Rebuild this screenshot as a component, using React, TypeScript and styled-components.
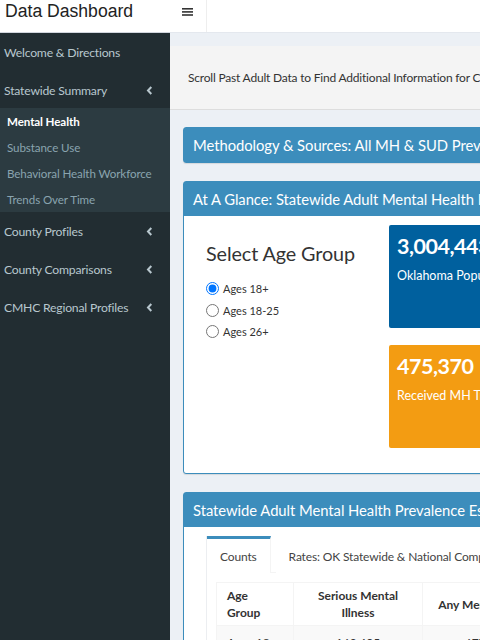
import React from 'react';
import styled, { createGlobalStyle } from 'styled-components';

const GlobalStyle = createGlobalStyle`
  html, body {
    margin: 0;
    padding: 0;
    overflow: hidden;
    background: #ecf0f5;
  }
  body {
    font-family: Lato, 'Open Sans', sans-serif;
    font-size: 12px;
    color: #333;
  }
`;

const Page = styled.div`
  display: grid;
  grid-template-columns: 170px 900px;
  grid-template-rows: 33px 1fr;
  min-height: 100vh;
  width: 1070px;
`;

const Logo = styled.div`
  background: #fff;
  border-bottom: 1px solid #d2d6de;
  box-sizing: border-box;
  font-family: 'Liberation Sans', Arial, sans-serif;
  font-size: 17.6px;
  line-height: 22px;
  padding: 0 0 0 5px;
  color: #222;
`;

const Navbar = styled.div`
  background: #fff;
  display: flex;
  border-bottom: 1px solid #e4e8ee;
  box-sizing: border-box;
`;

const Toggle = styled.div`
  width: 37px;
  border-right: 1px solid #eee;
  display: flex;
  justify-content: center;
  align-items: flex-start;
  padding: 8px 1px 0 0;
  box-sizing: border-box;
`;

const BarsIcon = () => (
  <svg width="11" height="8" viewBox="0 0 11 8">
    <rect x="0" y="0" width="11" height="1.6" fill="#333" />
    <rect x="0" y="3.1" width="11" height="1.6" fill="#333" />
    <rect x="0" y="6.2" width="11" height="1.6" fill="#333" />
  </svg>
);

const Sidebar = styled.nav`
  background: #222d32;
  display: flex;
  flex-direction: column;
`;

const MenuItem = styled.div`
  height: 38px;
  flex-shrink: 0;
  display: flex;
  align-items: center;
  justify-content: space-between;
  padding: 0 17px 0 4px;
  color: #b8c7ce;
  font-size: 12.2px;
  letter-spacing: -0.2px;
  white-space: nowrap;
`;

const SubMenu = styled.div`
  background: #2c3b41;
  margin-top: -1px;
`;

const SubItem = styled.div<{ $active?: boolean }>`
  height: 26px;
  display: flex;
  align-items: center;
  padding-left: 7px;
  font-size: 11.6px;
  letter-spacing: -0.1px;
  color: ${p => (p.$active ? '#fff' : '#8aa4af')};
  font-weight: ${p => (p.$active ? 700 : 400)};
`;

const Chevron = () => (
  <svg width="7" height="9" viewBox="0 0 7 9">
    <path d="M5.3 1 L2 4.5 L5.3 8" stroke="#b8c7ce" strokeWidth="2" fill="none" />
  </svg>
);

const Content = styled.main`
  display: flex;
  flex-direction: column;
  padding-top: 13px;
`;

const Notice = styled.div`
  background: #f4f4f4;
  border-bottom: 1px solid #ddd;
  height: 63px;
  display: flex;
  align-items: center;
  padding-left: 18px;
  font-size: 12px;
  letter-spacing: -0.2px;
  color: #333;
  white-space: nowrap;
`;

const Boxes = styled.div`
  display: flex;
  flex-direction: column;
  gap: 18px;
  padding: 17px 0 0 13px;
`;

const Box = styled.section`
  border: 1px solid #3c8dbc;
  border-radius: 3px;
  background: #fff;
  box-shadow: 0 1px 1px rgba(0, 0, 0, 0.1);
`;

const BoxHeader = styled.div`
  background: #3c8dbc;
  color: #fff;
  height: 34px;
  display: flex;
  align-items: center;
  padding-left: 9px;
  font-size: 14.8px;
  letter-spacing: -0.05px;
  white-space: nowrap;
`;

const GlanceBody = styled.div`
  display: grid;
  grid-template-columns: 183px 1fr;
  padding: 9px 0 25px 22px;
`;

const AgePicker = styled.div`
  padding-top: 16px;
`;

const PickerTitle = styled.div`
  font-size: 19.8px;
  letter-spacing: -0.1px;
  color: #333;
  margin-bottom: 13px;
`;

const RadioRow = styled.label`
  display: flex;
  align-items: center;
  gap: 4px;
  height: 21.5px;
  font-size: 11px;
  color: #333;

  input {
    margin: 0;
    width: 13px;
    height: 13px;
  }
`;

const ValueStack = styled.div`
  display: flex;
  flex-direction: column;
  gap: 17px;
`;

const ValueBox = styled.div<{ $bg: string }>`
  background: ${p => p.$bg};
  color: #fff;
  height: 103px;
  border-radius: 2px;
  padding: 7px 8px;
  box-sizing: border-box;
  white-space: nowrap;
`;

const ValueNumber = styled.div`
  font-size: 21.5px;
  font-weight: 700;
  letter-spacing: -0.5px;
  line-height: 28px;
`;

const ValueLabel = styled.div`
  font-size: 12.5px;
  margin-top: 8px;
`;

const TableBody = styled.div`
  padding: 9px 0 0 22px;
`;

const TabsCard = styled.div`
  border-left: 1px solid #eceef1;
  background: #fff;
`;

const TabList = styled.div`
  display: flex;
  gap: 5px;
  border-bottom: 1px solid #f4f4f4;
`;

const Tab = styled.div<{ $active?: boolean }>`
  height: 37px;
  box-sizing: border-box;
  display: flex;
  align-items: center;
  padding: 0 13px;
  font-size: 12px;
  letter-spacing: -0.15px;
  color: #444;
  white-space: nowrap;
  border-top: 3px solid ${p => (p.$active ? '#3c8dbc' : 'transparent')};
  border-right: 1px solid ${p => (p.$active ? '#f4f4f4' : 'transparent')};
  margin-bottom: -1px;
  background: #fff;
`;

const TabPane = styled.div`
  padding: 9px;
`;

const Table = styled.table`
  border-collapse: collapse;
  font-size: 12px;
  color: #333;

  th, td {
    border: 1px solid #f4f4f4;
    padding: 4px 10px;
    line-height: 17px;
  }
  td {
    padding-top: 8px;
  }
  th {
    font-weight: 700;
  }
  tbody tr:nth-child(odd) {
    background: #f9f9f9;
  }
`;

const HeadCell = styled.th<{ $w: number; $align?: string }>`
  width: ${p => p.$w}px;
  text-align: ${p => p.$align || 'center'};
`;

const BodyCell = styled.td<{ $align?: string }>`
  text-align: ${p => p.$align || 'center'};
`;

const sideItems = ['County Profiles', 'County Comparisons', 'CMHC Regional Profiles'];

const App: React.FC = () => {
  return (
    <>
      <GlobalStyle />
      <Page>
        <Logo>Data Dashboard</Logo>
        <Navbar>
          <Toggle>
            <BarsIcon />
          </Toggle>
        </Navbar>
        <Sidebar>
          <MenuItem>Welcome &amp; Directions</MenuItem>
          <MenuItem>
            Statewide Summary <Chevron />
          </MenuItem>
          <SubMenu>
            <SubItem $active>Mental Health</SubItem>
            <SubItem>Substance Use</SubItem>
            <SubItem>Behavioral Health Workforce</SubItem>
            <SubItem>Trends Over Time</SubItem>
          </SubMenu>
          {sideItems.map(item => (
            <MenuItem key={item}>
              {item} <Chevron />
            </MenuItem>
          ))}
        </Sidebar>
        <Content>
          <Notice>
            Scroll Past Adult Data to Find Additional Information for Children and Adolescents
          </Notice>
          <Boxes>
            <Box>
              <BoxHeader>Methodology &amp; Sources: All MH &amp; SUD Prevalence Estimates</BoxHeader>
            </Box>
            <Box>
              <BoxHeader>At A Glance: Statewide Adult Mental Health Indicators</BoxHeader>
              <GlanceBody>
                <AgePicker>
                  <PickerTitle>Select Age Group</PickerTitle>
                  <RadioRow>
                    <input type="radio" name="age" defaultChecked /> Ages 18+
                  </RadioRow>
                  <RadioRow>
                    <input type="radio" name="age" /> Ages 18-25
                  </RadioRow>
                  <RadioRow>
                    <input type="radio" name="age" /> Ages 26+
                  </RadioRow>
                </AgePicker>
                <ValueStack>
                  <ValueBox $bg="#00609e">
                    <ValueNumber>3,004,443</ValueNumber>
                    <ValueLabel>Oklahoma Population Ages 18+</ValueLabel>
                  </ValueBox>
                  <ValueBox $bg="#f39c12">
                    <ValueNumber>475,370</ValueNumber>
                    <ValueLabel>Received MH Treatment in Past Year</ValueLabel>
                  </ValueBox>
                </ValueStack>
              </GlanceBody>
            </Box>
            <Box>
              <BoxHeader>Statewide Adult Mental Health Prevalence Estimates</BoxHeader>
              <TableBody>
                <TabsCard>
                  <TabList>
                    <Tab $active>Counts</Tab>
                    <Tab>Rates: OK Statewide &amp; National Comparison</Tab>
                  </TabList>
                  <TabPane>
                    <Table>
                      <thead>
                        <tr>
                          <HeadCell $w={56} $align="left">Age Group</HeadCell>
                          <HeadCell $w={108}>Serious Mental Illness</HeadCell>
                          <HeadCell $w={108}>Any Mental Illness</HeadCell>
                        </tr>
                      </thead>
                      <tbody>
                        <tr>
                          <BodyCell $align="left">Ages 18+</BodyCell>
                          <BodyCell>169,405</BodyCell>
                          <BodyCell>677,620</BodyCell>
                        </tr>
                      </tbody>
                    </Table>
                  </TabPane>
                </TabsCard>
              </TableBody>
            </Box>
          </Boxes>
        </Content>
      </Page>
    </>
  );
};

export default App;
